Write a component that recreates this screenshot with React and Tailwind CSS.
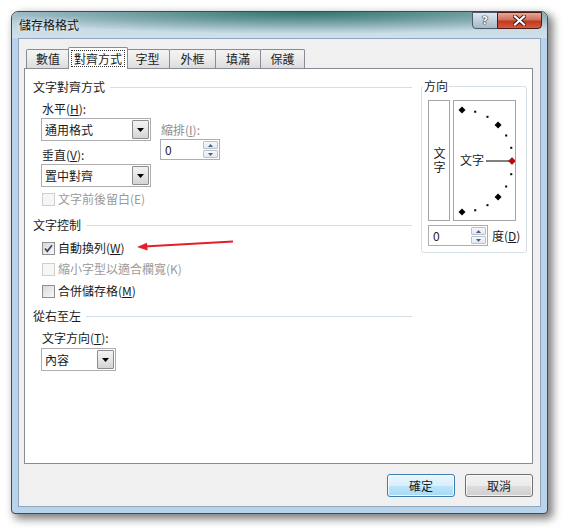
import React from 'react';

const Ul = ({ children }) => <span className="underline underline-offset-[1px]">{children}</span>;

const GroupTitle = ({ title }) => (
  <div className="flex items-center h-[14px] gap-[5px]">
    <span>{title}</span>
    <div className="flex-1 h-px bg-[#d5dfe5]" />
  </div>
);

const Combo = ({ value, w }) => (
  <div className={`flex h-[23px] ${w} border border-[#abadb3] bg-white`}>
    <div className="flex-1 flex items-center pl-[3px]">{value}</div>
    <div className="w-[17px] m-px flex items-center justify-center border border-[#8c8c8c] rounded-[1px] bg-[linear-gradient(#f3f3f3,#e6e6e6_50%,#d4d4d4)]">
      <svg width="7" height="4" viewBox="0 0 7 4"><polygon points="0,0 7,0 3.5,4" fill="#000" /></svg>
    </div>
  </div>
);

const Spin = ({ w }) => (
  <div className={`flex h-[21px] ${w} border border-[#abadb3] bg-white`}>
    <div className="flex-1 flex items-center pl-[4px]">0</div>
    <div className="w-[15px] my-px mr-px flex flex-col gap-px">
      <div className="flex-1 flex items-center justify-center border border-[#b8c2cf] rounded-[1px] bg-[linear-gradient(#f6f8fa,#e2e8ee)]">
        <svg width="5" height="3" viewBox="0 0 5 3"><polygon points="2.5,0 5,3 0,3" fill="#4d5f80" /></svg>
      </div>
      <div className="flex-1 flex items-center justify-center border border-[#b8c2cf] rounded-[1px] bg-[linear-gradient(#f6f8fa,#e2e8ee)]">
        <svg width="5" height="3" viewBox="0 0 5 3"><polygon points="0,0 5,0 2.5,3" fill="#4d5f80" /></svg>
      </div>
    </div>
  </div>
);

const Check = ({ checked, disabled, children }) => (
  <div className="flex items-center h-[14px] gap-[3px]">
    <span
      className={`w-[13px] h-[13px] border flex items-center justify-center ${
        disabled
          ? 'border-[#cfcfcf] bg-[#f6f6f6]'
          : 'border-[#8e8f8f] bg-[linear-gradient(135deg,#d8d8d8,#f8f8f8)]'
      }`}
    >
      {checked && (
        <svg width="11" height="11" viewBox="0 0 11 11">
          <path d="M2 5.5 L4.3 8.3 L9 2.2" fill="none" stroke="#3a4766" strokeWidth="1.7" />
        </svg>
      )}
    </span>
    <span className={disabled ? 'text-[#9a9a9a]' : ''}>{children}</span>
  </div>
);

const Tab = ({ label, w, active }) =>
  active ? (
    <div className={`${w} h-[22px] -mx-[2px] relative z-10 bg-white border border-b-0 border-[#898c95] rounded-t-[2px] flex items-start justify-center pt-[3px]`}>
      <span className="px-[2px] leading-[15px] outline outline-1 outline-dotted outline-[#333]">{label}</span>
    </div>
  ) : (
    <div className={`${w} h-[19px] mb-px -ml-px first:ml-0 border border-b-0 border-[#898c95] rounded-t-[2px] bg-[linear-gradient(#f4f4f4,#ebebeb_50%,#dcdcdc)] flex items-center justify-center`}>
      {label}
    </div>
  );

const dots = [75, 60, 30, 15, -15, -30, -60, -75];
const diamonds = [90, 45, -45, -90];

const Dial = () => {
  const cx = 8, cy = 60, r = 51;
  const pt = (a) => [cx + r * Math.cos((a * Math.PI) / 180), cy - r * Math.sin((a * Math.PI) / 180)];
  return (
    <div className="relative w-[63px] h-[121px] border border-[#a5a5a5] bg-white">
      <svg className="absolute inset-0" width="61" height="119" viewBox="0 0 61 119">
        {dots.map((a) => {
          const [x, y] = pt(a);
          return <rect key={a} x={x - 1} y={y - 1} width="2" height="2" fill="#000" />;
        })}
        {diamonds.map((a) => {
          const [x, y] = pt(a);
          return <polygon key={a} points={`${x},${y - 3.5} ${x + 3.5},${y} ${x},${y + 3.5} ${x - 3.5},${y}`} fill="#000" />;
        })}
        <line x1="32" y1="60" x2="55" y2="60" stroke="#000" strokeWidth="1" />
        <polygon points="58,56.5 61.5,60 58,63.5 54.5,60" fill="#d00000" stroke="#400" strokeWidth="0.5" />
      </svg>
      <span className="absolute left-[6px] top-[52px] leading-[14px]">文字</span>
    </div>
  );
};

export default function App() {
  return (
    <div className="relative w-[567px] h-[532px] bg-white pl-[11px] pt-[11px] text-[12px] text-[#1b1b1b] font-['Noto_Sans_CJK_TC','Noto_Sans_CJK_SC',sans-serif]">
      <div className="w-[537px] h-[503px] flex flex-col rounded-t-[7px] rounded-b-[4px] border border-[#3f4a55] bg-[#b9d3ec] shadow-[4px_4px_8px_1px_rgba(0,0,0,0.5)] px-[6px] pb-[6px]">
        {/* Title bar */}
        <div className="h-[26px] -mx-[6px] flex items-start rounded-t-[6px] bg-[radial-gradient(ellipse_62%_85%_at_55%_0%,rgba(35,108,98,0.9),rgba(35,108,98,0)_100%),linear-gradient(#a9c2d0,#c9dbe7_70%,#cfe0ec)]">
          <span className="ml-[7px] mt-[6px] leading-[14px] text-[#111] [text-shadow:0_0_4px_rgba(255,255,255,0.9)]">儲存格格式</span>
          <div className="ml-auto mr-[5px] flex h-[17px]">
            <div className="w-[26px] flex items-center justify-center border border-[#4e5b66] rounded-bl-[4px] bg-[linear-gradient(#dfe8ef,#bfd0dc_50%,#a6b9c6)]">
              <span className="font-['DejaVu_Sans',sans-serif] font-bold text-[11px] leading-none text-white [text-shadow:0_0_1px_#222,0_0_1px_#222,0_0_1px_#222]">?</span>
            </div>
            <div className="w-[45px] -ml-px flex items-center justify-center border border-[#4a1c14] rounded-br-[4px] bg-[linear-gradient(#e7a798,#d0705d_45%,#c2391f_55%,#d85a3c)]">
              <svg width="13" height="11" viewBox="0 0 13 11">
                <path d="M2 1.5 L11 9.5 M11 1.5 L2 9.5" stroke="#3a1a14" strokeWidth="4" strokeLinecap="square" />
                <path d="M2 1.5 L11 9.5 M11 1.5 L2 9.5" stroke="#fff" strokeWidth="2.2" strokeLinecap="square" />
              </svg>
            </div>
          </div>
        </div>

        {/* Client */}
        <div className="flex-1 flex flex-col bg-[#f0f0f0] border border-[#92a6bb] pt-[8px] pl-[5px] pr-[7px]">
          <div className="flex items-end h-[22px] pl-[2px]">
            <Tab label="數值" w="w-[44px]" />
            <Tab label="對齊方式" w="w-[60px]" active />
            <Tab label="字型" w="w-[45px]" />
            <Tab label="外框" w="w-[47px]" />
            <Tab label="填滿" w="w-[46px]" />
            <Tab label="保護" w="w-[45px]" />
          </div>

          <div className="h-[396px] -mt-px bg-white border border-[#898c95] flex">
            {/* Left column */}
            <div className="w-[387px] pl-[8px] pt-[11px]">
              <GroupTitle title="文字對齊方式" />
              <div className="pl-[8px]">
                <div className="mt-[8px] h-[14px] flex items-center pl-px">水平(<Ul>H</Ul>):</div>
                <div className="flex">
                  <div>
                    <div className="mt-[2px]"><Combo value="通用格式" w="w-[110px]" /></div>
                    <div className="mt-[7px] h-[14px] flex items-center pl-px">垂直(<Ul>V</Ul>):</div>
                    <div className="mt-[2px]"><Combo value="置中對齊" w="w-[110px]" /></div>
                  </div>
                  <div className="ml-[9px]">
                    <div className="mt-[7px] h-[14px] flex items-center pl-px text-[#8d8d8d]">縮排(<Ul>I</Ul>):</div>
                    <div className="mt-[2px]"><Spin w="w-[60px]" /></div>
                  </div>
                </div>
                <div className="mt-[5px] pl-px">
                  <Check disabled>文字前後留白(E)</Check>
                </div>
              </div>

              <div className="mt-[12px]"><GroupTitle title="文字控制" /></div>
              <div className="pl-[9px]">
                <div className="mt-[9px]"><Check checked>自動換列(<Ul>W</Ul>)</Check></div>
                <div className="mt-[7px]"><Check disabled>縮小字型以適合欄寬(K)</Check></div>
                <div className="mt-[8px]"><Check>合併儲存格(<Ul>M</Ul>)</Check></div>
              </div>

              <div className="mt-[11px]"><GroupTitle title="從右至左" /></div>
              <div className="pl-[8px]">
                <div className="mt-[8px] h-[14px] flex items-center pl-px">文字方向(<Ul>T</Ul>):</div>
                <div className="mt-[3px]"><Combo value="內容" w="w-[75px]" /></div>
              </div>
            </div>

            {/* Right column */}
            <div className="ml-[9px] pt-[10px]">
              <fieldset className="w-[104px] border border-[#d5dfe5] rounded-[3px] px-[6px] pt-[7px] pb-[6px]">
                <legend className="-ml-[5px] px-[1px] leading-[14px]">方向</legend>
                <div className="flex gap-[3px]">
                  <div className="w-[22px] h-[121px] border border-[#a5a5a5] bg-white flex items-center justify-center">
                    <span className="[writing-mode:vertical-rl] tracking-[2px] leading-[12px]">文字</span>
                  </div>
                  <Dial />
                </div>
                <div className="mt-[4px] flex items-center gap-[4px] whitespace-nowrap">
                  <Spin w="w-[60px] shrink-0" />
                  <span className="whitespace-nowrap">度(<Ul>D</Ul>)</span>
                </div>
              </fieldset>
            </div>
          </div>

          <div className="mt-[10px] flex justify-end gap-[10px]">
            <button className="w-[68px] h-[23px] rounded-[3px] border border-[#3c7fb1] bg-[linear-gradient(#eaf6fd,#d9f0fc_50%,#bee6fd_51%,#a7d9f5)] shadow-[inset_0_0_0_1px_rgba(255,255,255,0.8)]">確定</button>
            <button className="w-[68px] h-[23px] rounded-[3px] border border-[#707070] bg-[linear-gradient(#f2f2f2,#ebebeb_50%,#dddddd_51%,#cfcfcf)] shadow-[inset_0_0_0_1px_rgba(255,255,255,0.7)]">取消</button>
          </div>
        </div>
      </div>

      {/* red annotation arrow */}
      <svg className="absolute left-0 top-0 pointer-events-none" width="567" height="532" viewBox="0 0 567 532">
        <line x1="233" y1="241.5" x2="144" y2="246.5" stroke="#e3202a" strokeWidth="1.8" />
        <polygon points="137,247 147,242.8 147.6,250.4" fill="#e3202a" />
      </svg>
    </div>
  );
}
